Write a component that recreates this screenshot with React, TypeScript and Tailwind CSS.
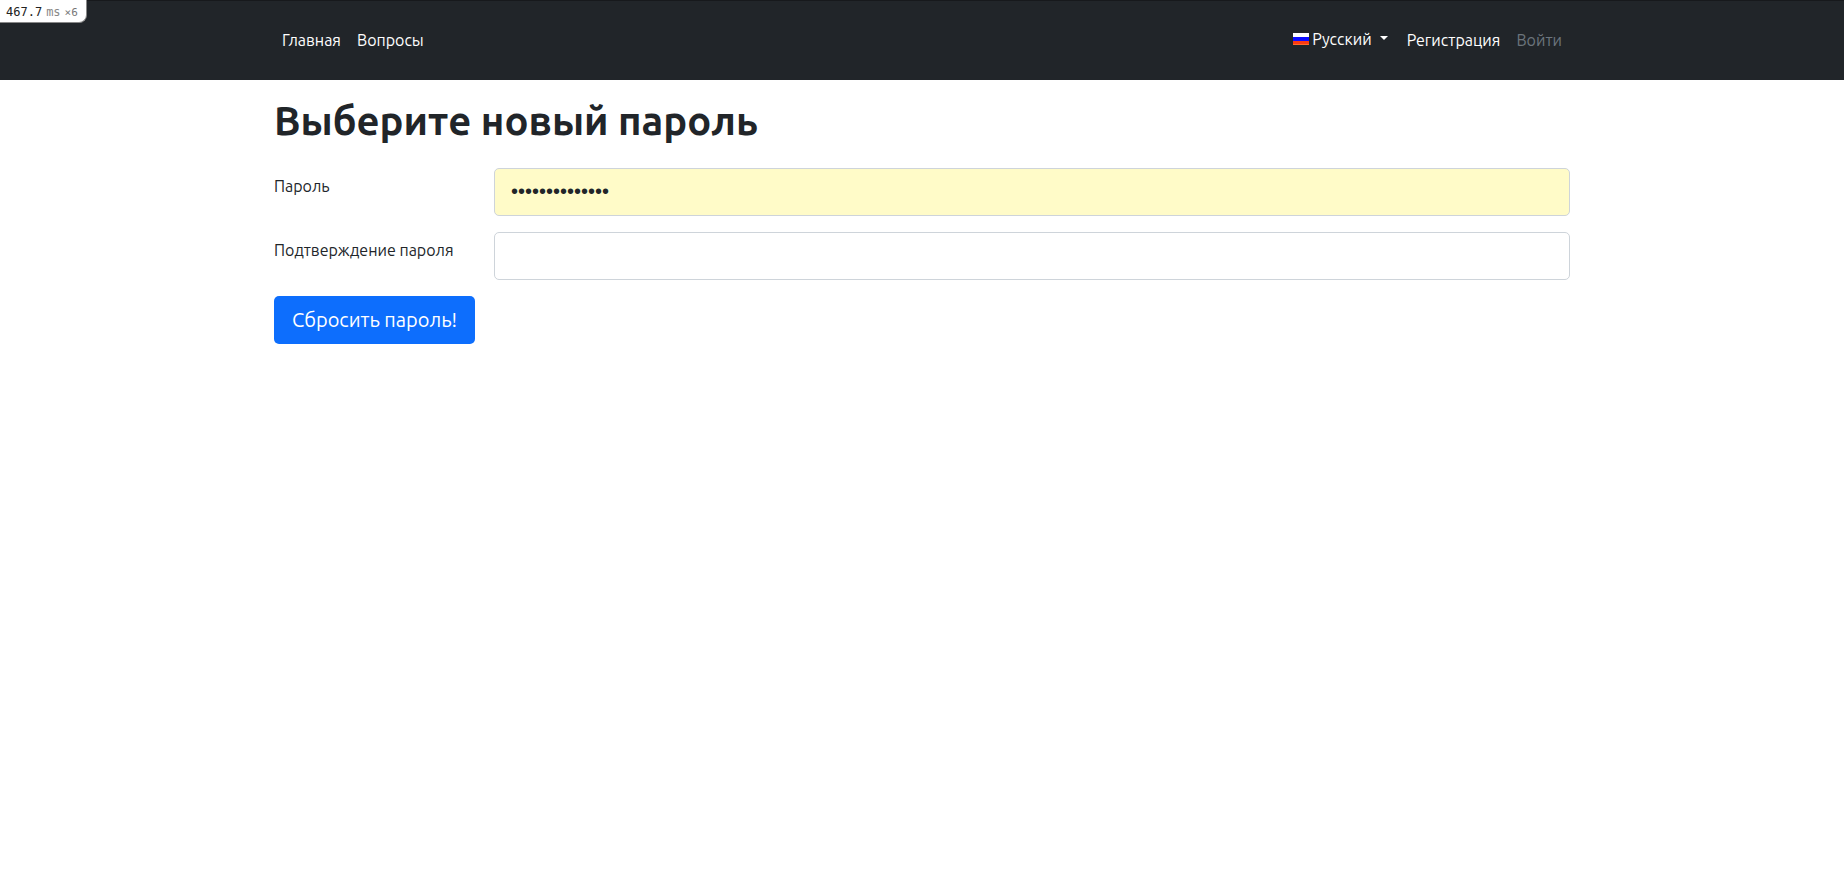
import { useState } from "react";

const navLink = "px-2 py-2 text-white hover:text-gray-300";
const field =
  "h-12 w-full rounded-[5px] border border-[#ced4da] px-4 pb-px font-['Liberation_Sans',sans-serif] text-xl text-[#212529] outline-none focus:border-[#86b7fe]";

function RussianFlag() {
  return (
    <svg viewBox="0 0 16 12" className="h-3 w-4" aria-hidden="true">
      <rect width="16" height="4" fill="#ffffff" />
      <rect y="4" width="16" height="4" fill="#0c0cff" />
      <rect y="8" width="16" height="4" fill="#fb3a12" />
      <rect y="11" width="16" height="1" fill="#ff6a2a" />
    </svg>
  );
}

export default function App() {
  const [password, setPassword] = useState("secretpassword");
  const [confirmation, setConfirmation] = useState("");

  return (
    <div className="min-h-screen bg-white font-['Ubuntu','Noto_Sans',sans-serif] text-base text-[#212529]">
      <div className="fixed top-0 left-0 flex items-baseline gap-1 rounded-br-lg border-r border-b border-[#888888] bg-white pt-1 pr-2 pb-px pl-1.5 font-['DejaVu_Sans_Mono',monospace] text-xs leading-4 text-[#222222]">
        <span>467.7</span>
        <span className="text-[#888888]">ms</span>
        <span className="text-[11px] text-[#777777]">×6</span>
      </div>

      <header className="border-t border-[#17191c] bg-[#212529]">
        <nav className="mx-auto flex h-[79px] max-w-[1320px] items-center justify-between px-3 pb-0.5">
          <div className="flex items-center">
            <a href="#home" className={navLink}>Главная</a>
            <a href="#questions" className={navLink}>Вопросы</a>
          </div>
          <div className="flex items-center">
            <button type="button" className="flex items-center gap-[3px] px-2 pt-2 pb-2.5 pr-[10px] text-white">
              <RussianFlag />
              <span>Русский</span>
              <svg viewBox="0 0 10 5" className="ml-1 h-[5px] w-[10px]" aria-hidden="true">
                <path d="M1 0h8L5 4z" fill="currentColor" />
              </svg>
            </button>
            <a href="#signup" className={navLink}>Регистрация</a>
            <a href="#signin" className="px-2 py-2 text-[#6c757d]">Войти</a>
          </div>
        </nav>
      </header>

      <main className="mx-auto max-w-[1320px] px-3 pt-4">
        <h1 className="mb-[22px] text-[40px] leading-[50px] font-semibold">Выберите новый пароль</h1>
        <form className="flex flex-col items-start gap-4" onSubmit={(e) => e.preventDefault()}>
          <div className="grid w-full grid-cols-[220px_1fr]">
            <label htmlFor="password" className="pt-1.5">Пароль</label>
            <input
              id="password"
              type="password"
              value={password}
              onChange={(e) => setPassword(e.target.value)}
              className={`${field} bg-[#fffbc8]`}
            />
          </div>
          <div className="grid w-full grid-cols-[220px_1fr]">
            <label htmlFor="confirmation" className="pt-1.5">Подтверждение пароля</label>
            <input
              id="confirmation"
              type="password"
              value={confirmation}
              onChange={(e) => setConfirmation(e.target.value)}
              className={`${field} bg-white`}
            />
          </div>
          <button type="submit" className="h-12 rounded-[5px] bg-[#0d6efd] px-[18px] text-xl text-white hover:bg-[#0b5ed7]">
            Сбросить пароль!
          </button>
        </form>
      </main>
    </div>
  );
}
